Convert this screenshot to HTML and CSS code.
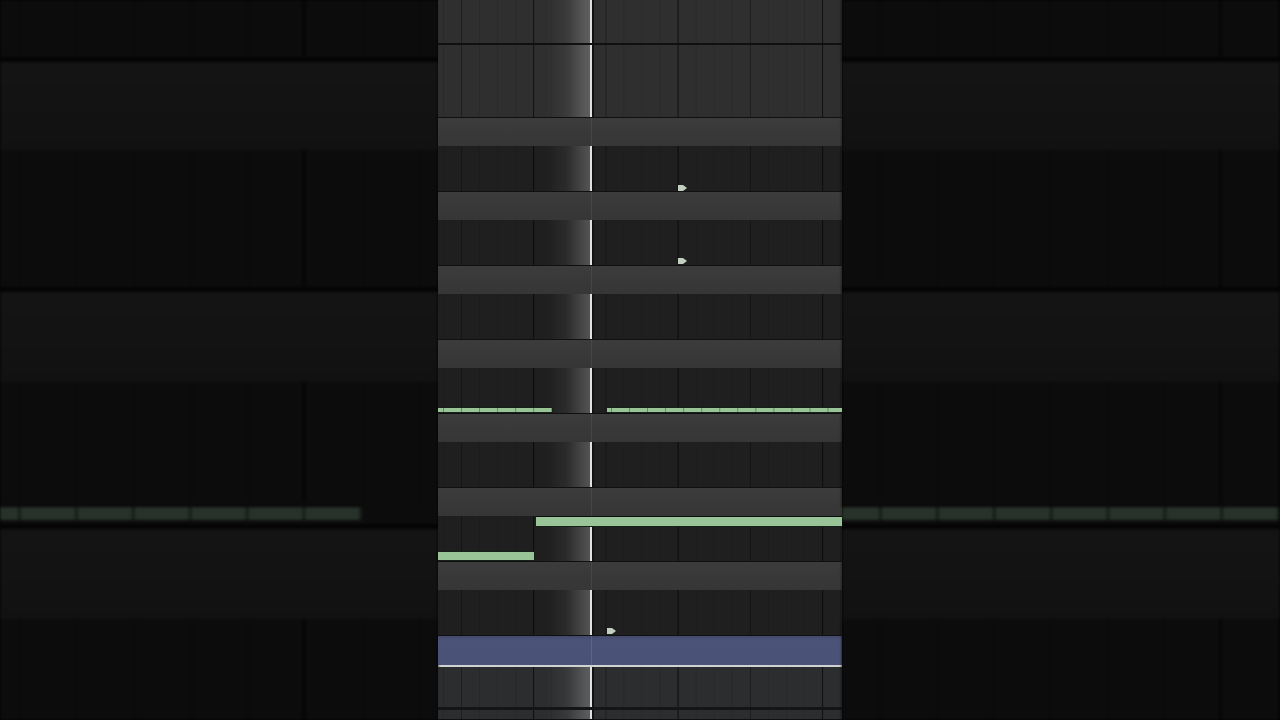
FILE: index.html
```html
<!DOCTYPE html>
<html lang="en">
<head>
<meta charset="utf-8">
<title>Arrangement view</title>
<link rel="stylesheet" href="styles.css">
</head>
<body>
<main class="frame">
  <section class="side side-left">
    <div class="s-grid s-h57"></div>
    <div class="s-line"></div>
    <div class="s-band s-h88"></div>
    <div class="s-grid s-h137"></div>
    <div class="s-line"></div>
    <div class="s-band s-h90"></div>
    <div class="s-grid s-h121"></div>
    <div class="s-noterow"><div class="s-note s-note-left"></div></div>
    <div class="s-band s-h90"></div>
    <div class="s-grid s-fill"></div>
  </section>

  <section class="center">
    <div class="lane light h43 thick"></div>
    <div class="lane light h72"></div>
    <div class="band"></div>
    <div class="lane dark h45">
      <svg class="marker m-240" viewBox="0 0 9 6" width="9" height="6"><path d="M0 0H5L9 3L5 6H0Z" fill="#c3d0bf"/></svg>
    </div>
    <div class="band"></div>
    <div class="lane dark h45">
      <svg class="marker m-240 mt38" viewBox="0 0 9 6" width="9" height="6"><path d="M0 0H5L9 3L5 6H0Z" fill="#c3d0bf"/></svg>
    </div>
    <div class="band"></div>
    <div class="lane dark h45"></div>
    <div class="band"></div>
    <div class="lane dark h45">
      <div class="note seg n-a"></div>
      <div class="note seg n-b"></div>
    </div>
    <div class="band"></div>
    <div class="lane dark h45"></div>
    <div class="band"></div>
    <div class="lane dark h45">
      <div class="note n-c"></div>
      <div class="note n-d"></div>
    </div>
    <div class="band"></div>
    <div class="lane dark h45">
      <svg class="marker m-168 mt38" viewBox="0 0 9 6" width="9" height="6"><path d="M0 0H5L9 3L5 6H0Z" fill="#c3d0bf"/></svg>
    </div>
    <div class="band blue"></div>
    <div class="whiteline"></div>
    <div class="lane slate h40 thick3"></div>
    <div class="lane slate fill"></div>
  </section>

  <section class="side side-right">
    <div class="s-grid s-h57"></div>
    <div class="s-line"></div>
    <div class="s-band s-h88"></div>
    <div class="s-grid s-h137"></div>
    <div class="s-line"></div>
    <div class="s-band s-h90"></div>
    <div class="s-grid s-h121"></div>
    <div class="s-noterow"><div class="s-note s-note-full"></div></div>
    <div class="s-band s-h90"></div>
    <div class="s-grid s-fill"></div>
  </section>
</main>
</body>
</html>
```

FILE: styles.css
```css
html, body {
  margin: 0;
  padding: 0;
  width: 1280px;
  height: 720px;
  overflow: hidden;
  background: #000;
  font-family: "Liberation Sans", Arial, sans-serif;
}

.frame {
  display: flex;
  width: 1280px;
  height: 720px;
}

/* ---------- blurred side fill ---------- */
.side {
  width: 438px;
  height: 720px;
  display: flex;
  flex-direction: column;
  overflow: hidden;
  filter: blur(1.5px);
  background: #0b0b0b;
}

.s-grid {
  background-color: #0c0c0c;
  background-image:
    linear-gradient(90deg, rgba(0,0,0,.55) 3px, transparent 3px),
    linear-gradient(90deg, rgba(0,0,0,.22) 2px, transparent 2px);
  background-repeat: no-repeat, repeat-x;
}
.side-left .s-grid {
  background-size: 3px 100%, 57.2px 100%;
  background-position: 302px 0, 19px 0;
}
.side-right .s-grid {
  background-size: 3px 100%, 56.9px 100%;
  background-position: 377px 0, 37px 0;
}

.s-line { height: 5px; background: #040404; }
.s-band {
  background: linear-gradient(#141414, #111111);
}
.s-h57 { height: 57px; }
.s-h88 { height: 88px; }
.s-h90 { height: 90px; }
.s-h121 { height: 121px; }
.s-h137 { height: 137px; }
.s-fill { flex: 1; }

.s-noterow {
  height: 21px;
  position: relative;
  background: #0c0c0c;
  border-bottom: 5px solid #040404;
}
.s-note {
  position: absolute;
  top: 4px;
  height: 13px;
  background-color: #27332a;
  background-image: linear-gradient(90deg, rgba(0,0,0,.45) 3px, transparent 3px);
  background-size: 56.9px 100%;
  box-shadow: 0 -2px 0 #050505;
}
.s-note-left { left: 0; width: 362px; background-position: 18px 0; }
.s-note-full { left: 0; right: 0; background-position: 37px 0; }

/* ---------- center arrangement ---------- */
.center {
  width: 404px;
  height: 720px;
  display: flex;
  flex-direction: column;
  overflow: hidden;
  background: #1e1e1e;
}

.lane {
  position: relative;
  flex: none;
  border-bottom: 1px solid #101010;
  background-image:
    linear-gradient(90deg, rgba(0,0,0,.45) 1px, transparent 1px),
    linear-gradient(90deg, rgba(0,0,0,.26) 1px, transparent 1px),
    linear-gradient(90deg, rgba(0,0,0,.11) 1px, transparent 1px);
  background-size: 144.5px 100%, 72.25px 100%, 18.06px 100%;
  background-position: 95px 0, 23px 0, 5px 0;
}
.lane.light { background-color: #2f2f2f; }
.lane.dark { background-color: #1f1f1f; }
.lane.slate { background-color: #2b2d2f; }
.lane.thick { border-bottom-width: 2px; }
.lane.thick3 { border-bottom: 3px solid #141516; }

.h40 { height: 40px; }
.h43 { height: 43px; }
.h45 { height: 45px; }
.h72 { height: 72px; }
.lane.fill { flex: 1; }

/* playhead glow + line, drawn over each lane */
.lane::before {
  content: "";
  position: absolute;
  top: 0;
  bottom: 0;
  left: 108px;
  width: 44px;
  background: linear-gradient(90deg, rgba(255,255,255,0) 0%, rgba(255,255,255,.05) 45%, rgba(255,255,255,.24) 100%);
  pointer-events: none;
}
.lane::after {
  content: "";
  position: absolute;
  top: 0;
  bottom: 0;
  left: 152px;
  width: 4px;
  background: linear-gradient(90deg, #e0e0e0 0 2px, #121212 2px 4px);
  pointer-events: none;
}

.band {
  position: relative;
  flex: none;
  height: 28px;
  background: linear-gradient(#3c3c3c, #383838 60%, #363636);
}
.band::after {
  content: "";
  position: absolute;
  top: 0;
  bottom: 0;
  left: 153px;
  width: 1px;
  background: rgba(255,255,255,.07);
}
.band.blue {
  height: 29px;
  background: linear-gradient(#434a6c, #4b5379 15%, #4a5277);
}
.band.blue::after { background: rgba(255,255,255,.1); }

.whiteline {
  flex: none;
  height: 2px;
  background: #d2d2d2;
}

/* notes */
.note {
  position: absolute;
  z-index: 1;
  box-sizing: border-box;
  background-color: #98c498;
  border: 1px solid #162016;
}
.note.seg {
  background-image: linear-gradient(90deg, rgba(20,40,20,.4) 1px, transparent 1px);
  background-size: 18.06px 100%;
}
.n-a { left: 0; top: 39px; width: 115px; height: 6px; background-position: 5px 0; border-left: none; }
.n-b { left: 168px; top: 39px; width: 236px; height: 6px; background-position: 4px 0; border-right: none; }
.n-c { left: 97px; top: 0; width: 307px; height: 11px; border-top-color: #0c0c0c; border-right: none; }
.n-d { left: 0; top: 35px; width: 97px; height: 10px; border-left: none; }

.marker {
  position: absolute;
  z-index: 1;
  top: 39px;
  display: block;
}
.m-240 { left: 240px; }
.m-168 { left: 169px; }
.mt38 { top: 38px; }
```
